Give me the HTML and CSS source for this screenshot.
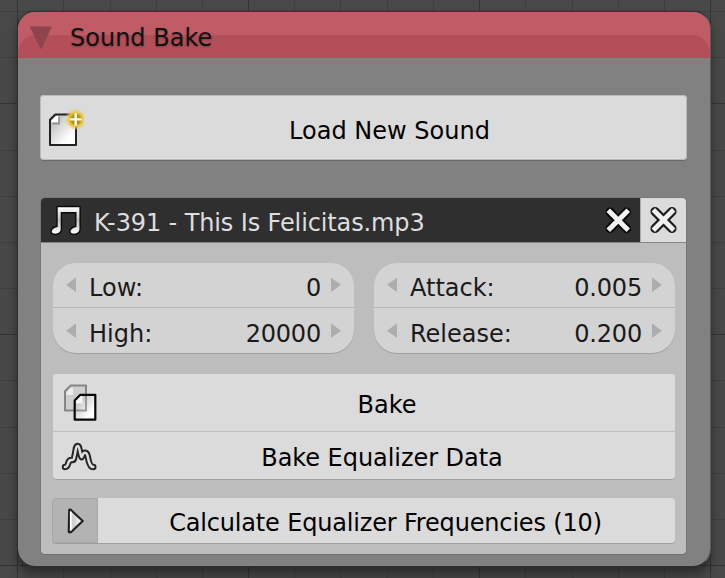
FILE: index.html
```
<!DOCTYPE html>
<html lang="en">
<head>
<meta charset="utf-8">
<title>Sound Bake</title>
<link rel="stylesheet" href="styles.css">
</head>
<body>
<main class="canvas">
  <svg class="grid" width="725" height="578" aria-hidden="true">
    <path class="minor" d="M63.5 0V578M110.5 0V578M156.5 0V578M202.5 0V578M294.5 0V578M340.5 0V578M387.5 0V578M433.5 0V578M525.5 0V578M572.5 0V578M618.5 0V578M664.5 0V578M0 11.5H725M0 57.5H725M0 150.5H725M0 196.5H725M0 242.5H725M0 288.5H725M0 380.5H725M0 427.5H725M0 473.5H725M0 519.5H725"/>
    <path class="major" d="M17.5 0V578M248.5 0V578M479.5 0V578M710.5 0V578M0 103.5H725M0 334.5H725M0 565.5H725"/>
  </svg>
  <section class="node">
    <header class="node-header">
      <svg class="collapse" width="24" height="24" viewBox="0 0 24 24"><path d="M.5 .5H23L12 23.5Z"/></svg>
      <h1 class="title">Sound Bake</h1>
    </header>
    <div class="node-body">
      <button class="load">
        <svg class="icon" width="44" height="44" viewBox="0 0 44 44">
          <defs>
            <linearGradient id="paper" x1="0" y1="0" x2="1" y2="1"><stop offset=".2" stop-color="#c4c4c4"/><stop offset=".75" stop-color="#fff"/></linearGradient>
            <radialGradient id="glow"><stop offset="0" stop-color="#ad8500"/><stop offset=".42" stop-color="#bd930c"/><stop offset=".62" stop-color="#e7c63d"/><stop offset="1" stop-color="#e7d070" stop-opacity="0"/></radialGradient>
          </defs>
          <path d="M10 13.8 15.3 8.5H36V39H10Z" fill="url(#paper)" stroke="#222" stroke-width="2" stroke-linejoin="round"/>
          <path d="M11.5 16.6V14.8L16 10H18.7V16.6Z" fill="#fff"/>
          <path d="M12.5 17.5H19V10.5" fill="none" stroke="#666" stroke-width="1.8" opacity=".6"/>
          <circle cx="35.7" cy="13.4" r="11" fill="url(#glow)"/>
          <path d="M35.7 7.3V19.5M29.7 13.4H41.7" stroke="#fff" stroke-width="2.4"/>
        </svg>
        <span class="label">Load New Sound</span>
      </button>
      <div class="box">
        <div class="file-row">
          <div class="file">
            <svg class="note" width="36" height="36" viewBox="0 0 36 36">
              <defs><linearGradient id="silver" x1="0" y1="0" x2="0" y2="1"><stop stop-color="#fff"/><stop offset=".5" stop-color="#c0c0c0"/><stop offset="1" stop-color="#fff"/></linearGradient></defs>
              <path class="note-edge" d="M8.7 4.2H30.4V26.3C30.4 29.5 26.8 31.2 23.6 30.5C19.7 29.6 21.7 24.7 27.5 24V9H11.7V26.3C11.7 29.5 8 31.2 4.8 30.5C.9 29.6 2.9 24.7 8.7 24Z"/>
              <path d="M8.7 4.2H30.4V26.3C30.4 29.5 26.8 31.2 23.6 30.5C19.7 29.6 21.7 24.7 27.5 24V9H11.7V26.3C11.7 29.5 8 31.2 4.8 30.5C.9 29.6 2.9 24.7 8.7 24Z" fill="url(#silver)"/>
            </svg>
            <span class="filename">K-391 - This Is Felicitas.mp3</span>
            <svg class="cross" width="28" height="28" viewBox="0 0 28 28"><path class="cross-edge" d="M6 6 22.5 22.5M22.5 6 6 22.5"/><path class="cross-fill" d="M6 6 22.5 22.5M22.5 6 6 22.5"/></svg>
          </div>
          <button class="unlink"><svg class="cross outline" width="28" height="28" viewBox="0 0 28 28"><path class="cross-edge" d="M5 5.5 22 22.5M22 5.5 5 22.5"/><path class="cross-fill" d="M5 5.5 22 22.5M22 5.5 5 22.5"/></svg></button>
        </div>
        <div class="numbers">
          <div class="pair">
            <div class="field"><svg class="arrow" width="10" height="16"><path d="M10 .5V15L0 7.7Z"/></svg><span>Low:</span><span class="value">0</span><svg class="arrow" width="10" height="16"><path d="M0 .5V15L10 7.7Z"/></svg></div>
            <div class="field"><svg class="arrow" width="10" height="16"><path d="M10 .5V15L0 7.7Z"/></svg><span>High:</span><span class="value">20000</span><svg class="arrow" width="10" height="16"><path d="M0 .5V15L10 7.7Z"/></svg></div>
          </div>
          <div class="pair">
            <div class="field"><svg class="arrow" width="10" height="16"><path d="M10 .5V15L0 7.7Z"/></svg><span>Attack:</span><span class="value">0.005</span><svg class="arrow" width="10" height="16"><path d="M0 .5V15L10 7.7Z"/></svg></div>
            <div class="field"><svg class="arrow" width="10" height="16"><path d="M10 .5V15L0 7.7Z"/></svg><span>Release:</span><span class="value">0.200</span><svg class="arrow" width="10" height="16"><path d="M0 .5V15L10 7.7Z"/></svg></div>
          </div>
        </div>
        <div class="actions">
          <button class="action bake">
            <svg class="icon" width="44" height="44" viewBox="0 0 44 44">
              <path d="M12 11.2 17.7 5.5H33V30.5H12Z" fill="#cecece" stroke="#858585" stroke-width="2" stroke-linejoin="round"/>
              <path d="M13.5 15V12L18 7.5H20V15Z" fill="#eee"/>
              <path d="M21.7 20.5 27.3 14.8H42.3V39.7H21.7Z" fill="url(#paper)" stroke="#080808" stroke-width="2.2" stroke-linejoin="round"/>
              <path d="M23 23.5V21L28 16H29.3V23.5Z" fill="#f7f7f7"/>
              <path d="M22.8 30.4H33V16" fill="none" stroke="#666" stroke-width="2" opacity=".6"/>
            </svg>
            <span class="label">Bake</span>
          </button>
          <button class="action equalize">
            <svg class="icon" width="44" height="44" viewBox="0 0 44 44"><g fill="none" stroke-linecap="round" stroke-linejoin="round"><path stroke="#262626" stroke-width="6.4" d="M12 33C16.5 33 13.7 26 18.3 26C21.5 26 20.3 27 21.8 20.8C22.7 16.5 22.8 12 24.5 12C26.8 12 26.2 16.8 28.3 22.5C29.2 24.8 28.9 18.8 32.2 18.8C35.1 18.8 34.7 24.5 36.2 28.5C37.4 31.6 38 33 40.3 33"/><path stroke="#dedede" stroke-width="2.5" d="M12 33C16.5 33 13.7 26 18.3 26C21.5 26 20.3 27 21.8 20.8C22.7 16.5 22.8 12 24.5 12C26.8 12 26.2 16.8 28.3 22.5C29.2 24.8 28.9 18.8 32.2 18.8C35.1 18.8 34.7 24.5 36.2 28.5C37.4 31.6 38 33 40.3 33"/></g></svg>
            <span class="label">Bake Equalizer Data</span>
          </button>
        </div>
        <div class="calculate">
          <button class="expand"><svg width="18" height="26" viewBox="0 0 18 26"><defs><linearGradient id="play"><stop stop-color="#fff"/><stop offset=".3" stop-color="#ccc"/><stop offset="1" stop-color="#fff"/></linearGradient></defs><path d="M2.2 1.8Q3.5 1.4 4.5 2.5L15.7 13L4.5 23.7Q3 25 1.8 24Z" fill="url(#play)" stroke="#202020" stroke-width="2.2" stroke-linejoin="round"/><path d="M3.7 3.5V22.4" stroke="#fff" stroke-width="1.6"/></svg></button>
          <button class="frequency">Calculate Equalizer Frequencies (10)</button>
        </div>
      </div>
    </div>
  </section>
</main>
</body>
</html>
```
FILE: styles.css
```
* { box-sizing: border-box; }
body { margin: 0; font-family: "DejaVu Sans", sans-serif; font-size: 24px; line-height: 28px; color: #1a1a1a; }
button { margin: 0; padding: 0; border: 0; font: inherit; color: #000; background: #dbdbdb; }
svg { display: block; flex: none; }
.canvas { position: relative; width: 725px; height: 578px; padding: 11px 0 0 17px; overflow: hidden; background: #484848; }
.grid { position: absolute; inset: 0; }
.minor, .major { fill: none; stroke-width: 1; }
.minor { stroke: #3e3e3e; }
.major { stroke: #343434; }
.node { position: relative; width: 694px; height: 556px; border: 1px solid #303030; border-right-color: #5d5d5d; border-radius: 18px; overflow: hidden; background: rgba(131, 131, 131, .98); background-clip: padding-box; box-shadow: 0 10px 12px rgba(0, 0, 0, .28), 0 2px 4px rgba(0, 0, 0, .2); }
.node-header { display: flex; align-items: center; height: 46px; padding: 6px 0 0 11px; gap: 17px; background: #c05c65; position: relative; }
.node-header::before { content: ""; position: absolute; inset: 23px 0 0; border-radius: 18px 18px 0 0; background: #b34f59; }
.collapse { position: relative; fill: #8d444c; }
.title { position: relative; margin: 0; font-size: 24px; font-weight: 400; color: #111; text-shadow: 0 1px 2px rgba(0, 0, 0, .25); }
.node-body { padding: 37px 24px 0 22px; }
.load { display: flex; align-items: center; width: 647px; height: 65px; border-radius: 4px; box-shadow: inset 0 0 0 1px #bababa, 0 1px 0 #686868; }
.load .icon { margin-top: 1px; }
.label { flex: 1; text-align: center; padding-left: 8px; }
.load .label { padding-top: 6px; }
.box { width: 645px; height: 356px; margin: 38px 0 0 1px; border-radius: 4px; background: #bdbdbd; overflow: hidden; box-shadow: 0 1px 0 #717171, 0 0 0 1px #777; }
.file-row { display: flex; height: 45px; border-bottom: 1px solid #858585; }
.file { display: flex; align-items: center; width: 599px; padding: 0 8px; background: #2f2f2f; color: #dedede; }
.note { margin-top: 2px; }
.note-edge { fill: #0b0b0b; stroke: #0b0b0b; stroke-width: 2.8; stroke-linejoin: round; }
.filename { flex: 1; margin: 5px 0 0 9px; white-space: nowrap; letter-spacing: -.12px; }
.unlink { display: flex; flex: 1; align-items: center; justify-content: center; border-left: 1px solid #aaa; border-radius: 0 4px 0 0; }
.cross path { fill: none; stroke-linecap: round; }
.cross .cross-edge { stroke: #080808; stroke-width: 9; }
.cross .cross-fill { stroke: #f1f1f1; stroke-width: 5; stroke-linecap: square; }
.outline .cross-edge { stroke: #1c1c1c; stroke-width: 9.2; }
.outline .cross-fill { stroke: #f0f0f0; stroke-width: 4.8; }
.numbers { display: flex; gap: 20px; margin: 20px 11px 0 12px; }
.pair { width: 301px; height: 90px; border-radius: 23px; overflow: hidden; background: #d3d3d3; box-shadow: 0 1px 0 #9f9f9f; }
.field { display: flex; align-items: center; height: 44px; padding: 0 13px; }
.field + .field { height: 46px; padding-top: 1px; border-top: 1px solid #b5b5b5; }
.field span { margin-top: 6px; margin-left: 13px; }
.field .value { margin-left: auto; margin-right: 10px; letter-spacing: -.2px; }
.arrow { fill: #adadad; margin-top: -1px; }
.actions { width: 622px; height: 105px; margin: 21px 0 0 12px; border-radius: 4px; overflow: hidden; background: #dbdbdb; box-shadow: 0 1px 0 #9f9f9f, inset 0 1px 0 #c8c8c8; }
.action { display: flex; align-items: center; width: 100%; }
.bake { height: 58px; border-bottom: 1px solid #bfbfbf; }
.bake .icon { margin-top: -1px; }
.equalize { height: 47px; }
.bake .label { padding-top: 4px; padding-left: 2px; }
.equalize .label { padding-top: 5px; padding-left: 0; padding-right: 8px; letter-spacing: -.05px; }
.calculate { display: flex; width: 623px; height: 45px; margin: 19px 0 0 11px; border-radius: 4px; overflow: hidden; box-shadow: 0 1px 0 #9f9f9f; }
.expand { display: flex; align-items: center; justify-content: center; width: 46px; border: 1px solid #a7a7a7; border-radius: 4px 0 0 4px; background: #b3b3b3; padding-left: 2px; }
.frequency { flex: 1; padding: 5px 2px 0 0; letter-spacing: -.17px; }
```
